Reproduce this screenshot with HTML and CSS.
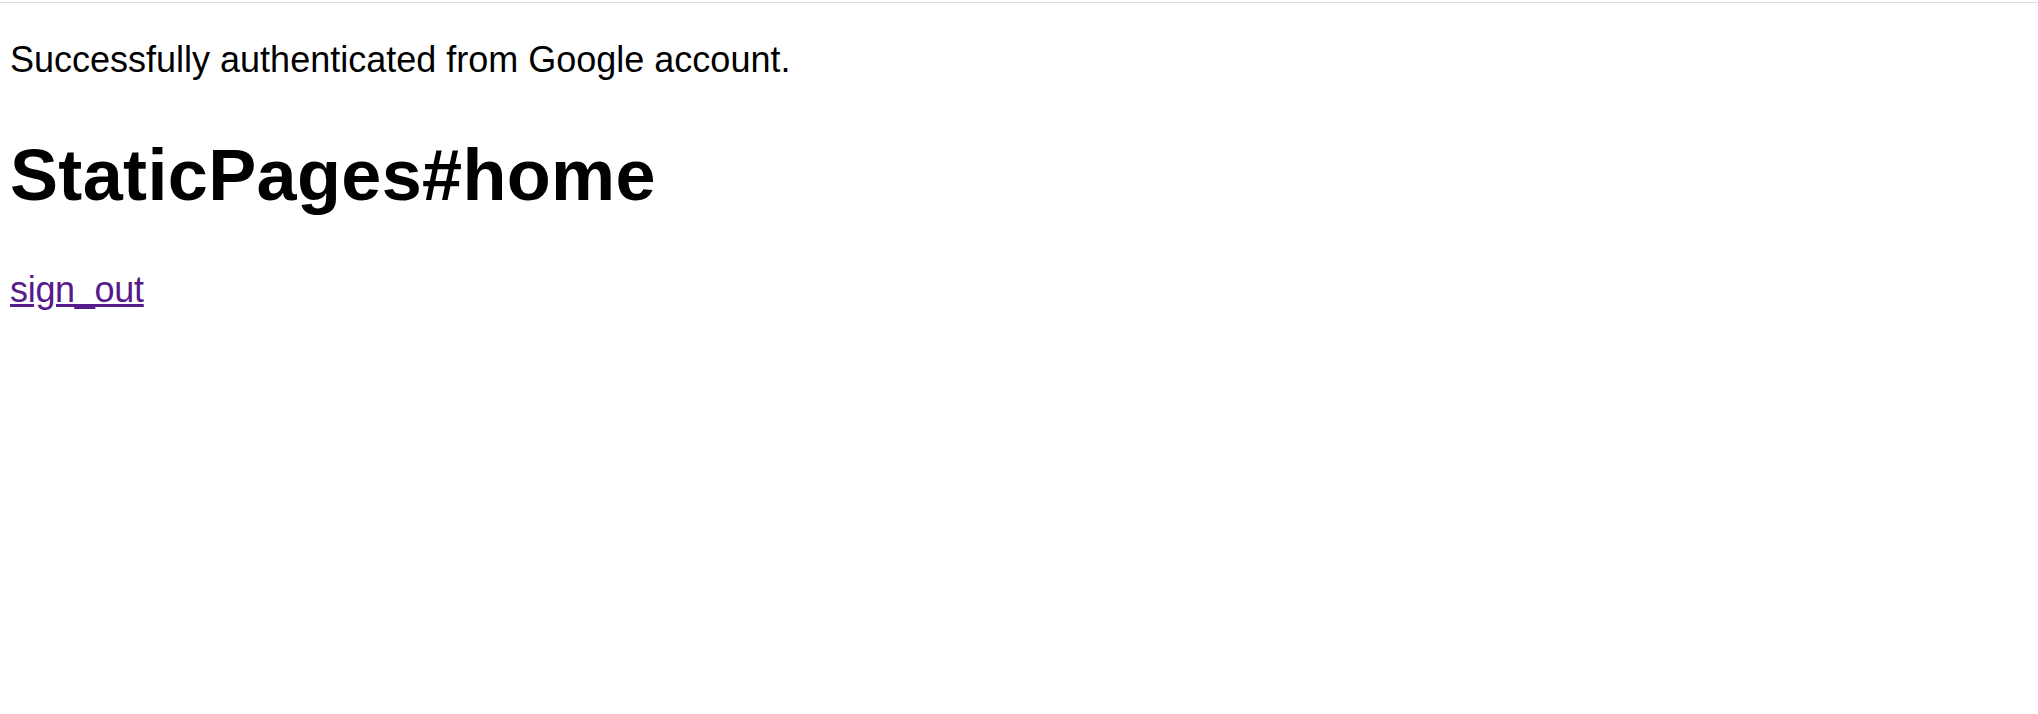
FILE: index.html
```html
<!DOCTYPE html>
<html lang="en">
<head>
<meta charset="utf-8">
<title>StaticPages#home</title>
<link rel="stylesheet" href="styles.css">
</head>
<body>
<div class="topline"></div>
<div class="page">
  <p class="notice">Successfully authenticated from Google account.</p>
  <h1 class="title">StaticPages#home</h1>
  <p class="actions"><a href="#" class="signout">sign_out</a></p>
</div>
</body>
</html>
```

FILE: styles.css
```css
*{margin:0; padding:0;}
body{font-family:"Liberation Sans", Arial, "Noto Sans CJK JP", sans-serif; color:#000; background:#fff;}

.topline{margin-top:2px; height:0; border-top:1px solid #dcdbe1;}
.page{padding:0 10px;}

.notice{font-size:36px; line-height:41px; margin-top:36px;}
.title{font-size:72px; font-weight:bold; line-height:82px; margin-top:54px; letter-spacing:0.35px;}
.actions{font-size:36px; line-height:41px; margin-top:53px;}
.signout{color:#551a8b; text-decoration:underline; letter-spacing:-0.3px;}
```
